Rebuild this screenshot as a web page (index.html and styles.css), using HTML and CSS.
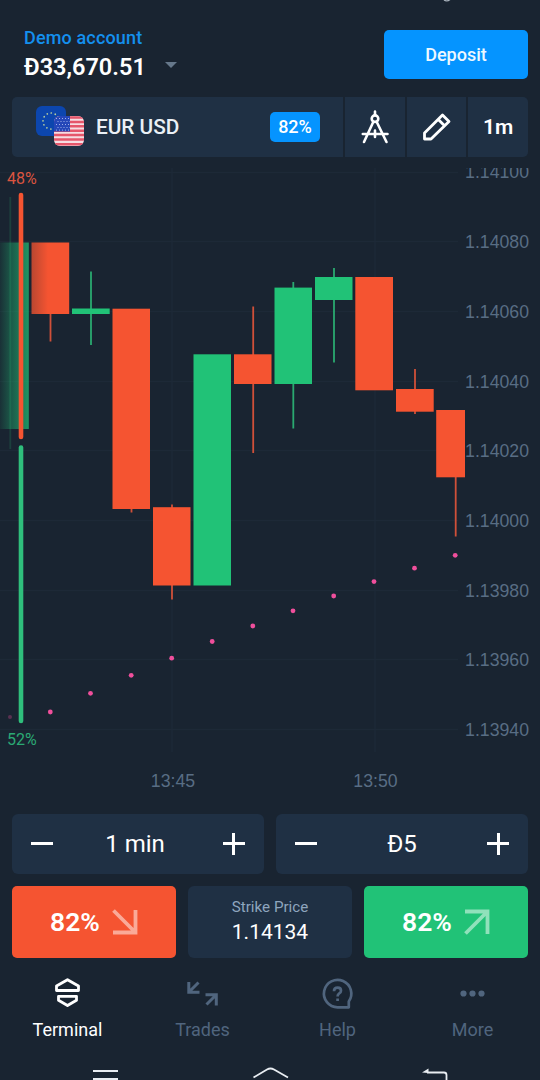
FILE: index.html
```html
<!DOCTYPE html>
<html lang="en">
  <head>
    <meta charset="UTF-8" />
    <meta name="viewport" content="width=device-width, initial-scale=1.0" />
    <title>EUR USD Terminal</title>
    <link rel="stylesheet" href="styles.css">
  </head>
  <body>
    <div class="app">
      <svg class="statusBar" viewBox="0 0 540 12">
        <path d="M444 0q3 2 6 -0.5" fill="none" stroke="#a9b3bd" stroke-width="1.3" />
      </svg>
      <header class="header">
        <div class="account">
          <span class="accountType">Demo account</span>
          <div class="balanceRow">
            <span class="balance">Đ33,670.51</span>
            <span class="caret"></span>
          </div>
        </div>
        <button class="depositBtn">Deposit</button>
      </header>

      <div class="toolbar">
        <div class="asset">
          <svg class="flags" width="50" height="42" viewBox="35 106.500 50 42">
            <rect x="36" y="106.500" width="30" height="30" rx="6" fill="#0c46ae" />
            <circle cx="51" cy="121.500" r="8" fill="none" stroke="#b9cf9c" stroke-width="1.7" stroke-linecap="round" stroke-dasharray="0.1 4.089" />
            <clipPath id="usFlag"><rect x="54" y="116.500" width="30" height="30" rx="6" /></clipPath>
            <g clip-path="url(#usFlag)">
              <rect x="54" y="116" width="30" height="31" fill="#f6dde2" />
              <path d="M54 118H84M54 122.400H84M54 126.800H84M54 131.200H84M54 135.600H84M54 140H84M54 144.700H84" stroke="#e5566b" stroke-width="2.500" />
              <rect x="54" y="116" width="16" height="16" fill="#2547b8" />
              <path d="M56 119H70M57.500 122H70M56 125H70M57.500 128H70M56 130.600H70" stroke="#9eb0e8" stroke-width="1" stroke-dasharray="1 2" />
            </g>
          </svg>
          <span class="assetName">EUR USD</span>
          <span class="payout">82%</span>
        </div>
        <button class="tool">
          <svg width="30" height="36" viewBox="360 109 30 36" fill="none" stroke="#fff" stroke-width="2.600" stroke-linecap="round">
            <path d="M375 111.500v3.500M373.500 121.500L364 142M376.500 121.500L386.500 142M362.800 134H387.500M375 130.500v6.500" />
            <circle cx="375" cy="118.700" r="3.300" />
          </svg>
        </button>
        <button class="tool">
          <svg width="30" height="30" viewBox="422 111.500 30 30" fill="none" stroke="#fff" stroke-width="2.800" stroke-linejoin="round">
            <path d="M424.500 138.500V132.500L442.500 114.500L449 121L431 138.500ZM437.800 118.500L444.800 125.500" />
          </svg>
        </button>
        <button class="tool timeframe">1m</button>
      </div>

      <svg class="chart" viewBox="0 168 540 634">
        <defs>
          <linearGradient id="fadeGreen" gradientUnits="userSpaceOnUse" x1="0" x2="29" y1="0" y2="0">
            <stop offset="0" stop-color="#21c277" stop-opacity="0.080" />
            <stop offset="0.350" stop-color="#21c277" stop-opacity="0.320" />
            <stop offset="1" stop-color="#21c277" stop-opacity="0.720" />
          </linearGradient>
          <linearGradient id="fadeRed" gradientUnits="userSpaceOnUse" x1="31" x2="48" y1="0" y2="0">
            <stop offset="0" stop-color="#f55431" stop-opacity="0.720" />
            <stop offset="1" stop-color="#f55431" />
          </linearGradient>
        </defs>

        <path class="grid" d="M0 172.500H458M0 241.500H458M0 311.500H458M0 381.500H458M0 450.500H458M0 520.500H458M0 590.500H458M0 659.500H458M0 729.500H458M172 168V752M375 168V752" />

        <g class="prices">
          <text x="529" y="178">1.14100</text>
          <text x="529" y="248">1.14080</text>
          <text x="529" y="318">1.14060</text>
          <text x="529" y="387.500">1.14040</text>
          <text x="529" y="457">1.14020</text>
          <text x="529" y="527">1.14000</text>
          <text x="529" y="596.500">1.13980</text>
          <text x="529" y="666">1.13960</text>
          <text x="529" y="735.500">1.13940</text>
        </g>
        <g class="times">
          <text x="173" y="786.700">13:45</text>
          <text x="375.500" y="786.700">13:50</text>
        </g>

        <!-- wicks -->
        <path class="wick up faded" d="M10.300 197V449" />
        <path class="wick up" d="M91 271.500V345M293.300 282V428.500M334 268V362.500" />
        <path class="wick down" d="M50.500 313V341.500M131.500 508V512.500M172 504.500V599.500M253.200 306.500V453M415 369V414M455.700 476V536.500" />

        <!-- bodies -->
        <rect x="0" y="242.500" width="28.800" height="186.500" fill="url(#fadeGreen)" />
        <rect x="31.500" y="242.500" width="37.700" height="71.500" fill="url(#fadeRed)" />
        <rect class="up" x="72" y="308.500" width="37.700" height="5.500" />
        <rect class="down" x="112.500" y="308.700" width="37.500" height="200.300" />
        <rect class="down" x="153" y="507.200" width="37.500" height="78.300" />
        <rect class="up" x="193.500" y="354.300" width="37.500" height="231.200" />
        <rect class="down" x="234" y="354.300" width="37.500" height="29.700" />
        <rect class="up" x="274.500" y="287.600" width="37.500" height="96.400" />
        <rect class="up" x="315" y="277" width="37.500" height="23" />
        <rect class="down" x="355.300" y="277" width="37.700" height="113.300" />
        <rect class="down" x="396" y="389" width="37.700" height="22.700" />
        <rect class="down" x="436.200" y="410" width="28.800" height="67.300" />

        <g class="dots">
          <circle cx="10" cy="717" r="2" opacity="0.300" />
          <circle cx="50.300" cy="712" r="2.400" />
          <circle cx="90.500" cy="693.300" r="2.400" />
          <circle cx="131.200" cy="675.300" r="2.400" />
          <circle cx="171.700" cy="658.200" r="2.400" />
          <circle cx="212.200" cy="641.500" r="2.400" />
          <circle cx="252.800" cy="626" r="2.400" />
          <circle cx="293" cy="610.800" r="2.400" />
          <circle cx="333.700" cy="596" r="2.400" />
          <circle cx="374" cy="581.600" r="2.400" />
          <circle cx="414.500" cy="568.200" r="2.400" />
          <circle cx="455.200" cy="555.300" r="2.400" />
        </g>

        <!-- traders sentiment -->
        <path class="sentiment" stroke="#f55431" d="M21 195V437" />
        <path class="sentiment" stroke="#2fbf7c" d="M21 447.500V721" />
        <text class="share" x="7" y="184" fill="#dc5540">48%</text>
        <text class="share" x="7" y="745" fill="#2ba974">52%</text>
      </svg>

      <div class="inputs">
        <div class="stepper">
          <button class="stepBtn minus"></button>
          <span class="duration">1 min</span>
          <button class="stepBtn plus"></button>
        </div>
        <div class="stepper">
          <button class="stepBtn minus"></button>
          <span>Đ5</span>
          <button class="stepBtn plus"></button>
        </div>
      </div>

      <div class="deals">
        <button class="dealBtn sell">
          <span>82%</span>
          <svg width="26" height="26" viewBox="0 0 26 26"><path d="M1.500 1.500L23 23M1 23.500H23.500V1" /></svg>
        </button>
        <div class="strike">
          <span class="strikeLabel">Strike Price</span>
          <span class="strikeValue">1.14134</span>
        </div>
        <button class="dealBtn buy">
          <span>82%</span>
          <svg width="26" height="26" viewBox="0 0 26 26"><path d="M1.500 24.500L23 3M1 2.500H23.500V25" /></svg>
        </button>
      </div>

      <nav class="tabs">
        <a class="tab active">
          <svg width="34" height="34" viewBox="51 976 34 34" stroke-width="2.800" stroke-linejoin="round">
            <path d="M56.500 990.500V986L67.500 979.700L78.500 986V990.500ZM58.500 996.300H76.500V1000.300L67.500 1005.500L58.500 1000.300Z" />
          </svg>
          <span>Terminal</span>
        </a>
        <a class="tab">
          <svg width="34" height="34" viewBox="186 976 34 34" stroke-width="3">
            <path d="M198.500 982.500L189.500 991.500M188.800 982V992.300H199.500M206.500 1004.500L215.500 995.500M205.500 994.800H216.300V1005.500" />
          </svg>
          <span>Trades</span>
        </a>
        <a class="tab">
          <svg width="34" height="34" viewBox="321 976 34 34" stroke-width="2.700">
            <path d="M348.800 1007.300H337.500A13.700 13.700 0 1 1 348.800 1001.500Z" stroke-linejoin="round" />
            <path d="M334 991.300Q334 987.700 337.700 987.700Q341 987.700 341 990.700Q341 992.500 339 993.700Q337.600 994.600 337.600 996.500M337.600 998.500V1001" />
          </svg>
          <span>Help</span>
        </a>
        <a class="tab">
          <svg class="moreIcon" width="34" height="34" viewBox="456 976 34 34">
            <circle cx="463.500" cy="993.500" r="3.100" />
            <circle cx="472.500" cy="993.500" r="3.100" />
            <circle cx="481.500" cy="993.500" r="3.100" />
          </svg>
          <span>More</span>
        </a>
      </nav>

      <svg class="systemNav" viewBox="0 1060 540 20">
        <path d="M93 1071H118M93 1079H118M253.500 1077.500L267 1069.500Q270.500 1067.500 274 1069.500L288 1077.500" />
        <path d="M427 1072.500H444Q446.500 1072.500 446.500 1075V1080" />
        <path d="M422 1072.500L428.500 1068.500V1073Z" fill="#e9edf2" stroke="none" />
      </svg>
    </div>
  </body>
</html>
```

FILE: styles.css
```css
* {
  box-sizing: border-box;
}

body {
  margin: 0;
  background-color: #192431;
  font-family: Roboto, "Liberation Sans", sans-serif;
  color: #fff;
}

button {
  font-family: inherit;
  color: inherit;
  border: none;
  padding: 0;
  background: none;
}

svg {
  display: block;
}

.app {
  height: 1080px;
  display: flex;
  flex-direction: column;
  overflow: hidden;
}

.statusBar {
  width: 540px;
  height: 12px;
}

.header {
  height: 84.5px;
  padding: 14px 12px 0 24px;
  display: flex;
  justify-content: space-between;
  align-items: flex-start;
}

.account {
  display: flex;
  flex-direction: column;
}

.accountType {
  font-size: 18px;
  line-height: 24px;
  font-weight: 500;
  letter-spacing: 0.15px;
  color: #1490ee;
}

.balanceRow {
  display: flex;
  align-items: center;
  gap: 19px;
}

.balance {
  padding-top: 1px;
  font-size: 23.5px;
  line-height: 32px;
  font-weight: 600;
}

.caret {
  border: 6.5px solid transparent;
  border-top-color: #66788b;
  border-bottom: none;
  margin-top: -3px;
}

.depositBtn {
  width: 144px;
  height: 49px;
  margin-top: 4px;
  border-radius: 5px;
  background-color: #0594ff;
  color: #eef8ff;
  font-size: 18px;
  font-weight: 500;
}

.toolbar {
  height: 60px;
  margin: 0 12px;
  display: flex;
  gap: 2px;
  border-radius: 5px;
  overflow: hidden;
}

.asset {
  width: 331px;
  padding: 0 23px 0 23px;
  display: flex;
  align-items: center;
  background-color: #1f3044;
}

.assetName {
  flex: 1;
  margin-left: 11px;
  padding-top: 1px;
  font-size: 20.8px;
  font-weight: 500;
  color: #eaf0f6;
}

.payout {
  width: 50px;
  height: 30px;
  border-radius: 5px;
  background-color: #0594ff;
  font-size: 18px;
  line-height: 30px;
  font-weight: 500;
  text-align: center;
}

.tool {
  flex: 1;
  display: flex;
  align-items: center;
  justify-content: center;
  background-color: #1f3044;
}

.timeframe {
  padding-top: 1px;
  font-size: 21px;
  font-weight: 600;
}

.chart {
  width: 540px;
  height: 634px;
  margin-top: 11.5px;
}

.grid {
  fill: none;
  stroke: #1d2937;
  stroke-width: 1.5;
}

.prices,
.times {
  font-family: "Liberation Sans", sans-serif;
  font-size: 17.7px;
  fill: #586d84;
}

.prices {
  text-anchor: end;
}

.times {
  text-anchor: middle;
}

.up {
  fill: #21c277;
  stroke: none;
}

.down {
  fill: #f55431;
  stroke: none;
}

.wick {
  stroke-width: 1.8;
}

.wick.up {
  stroke: #2aa970;
}

.wick.down {
  stroke: #cf5039;
}

.wick.faded {
  opacity: 0.2;
}

.dots {
  fill: #f04f9c;
}

.sentiment {
  stroke-width: 4.6;
  stroke-linecap: round;
}

.share {
  font-size: 16px;
}

.inputs {
  height: 60px;
  margin: 11.5px 12px 0;
  display: flex;
  gap: 12px;
}

.stepper {
  flex: 1;
  padding: 0 19px;
  display: flex;
  align-items: center;
  justify-content: space-between;
  border-radius: 6px;
  background-color: #1f3044;
  font-size: 24px;
}

.duration {
  margin-right: 6px;
}

.stepBtn {
  width: 22px;
  height: 22px;
  background: linear-gradient(#fff, #fff) center / 22px 3px no-repeat;
}

.plus {
  background: linear-gradient(#fff, #fff) center / 22px 3px no-repeat,
    linear-gradient(#fff, #fff) center / 3px 22px no-repeat;
}

.deals {
  height: 72px;
  margin: 12px 12px 0;
  display: flex;
  gap: 12px;
}

.dealBtn {
  flex: 1;
  display: flex;
  align-items: center;
  justify-content: center;
  gap: 12px;
  border-radius: 5px;
  font-size: 26.5px;
  font-weight: 600;
}

.dealBtn path {
  fill: none;
  stroke: #fff;
  stroke-opacity: 0.5;
  stroke-width: 3.8;
}

.sell {
  background-color: #f55431;
}

.buy {
  background-color: #21c277;
}

.strike {
  width: 164px;
  padding-top: 2px;
  display: flex;
  flex-direction: column;
  align-items: center;
  justify-content: center;
  border-radius: 6px;
  background-color: #1f3044;
}

.strikeLabel {
  font-size: 15.2px;
  line-height: 19px;
  color: #8ea5be;
}

.strikeValue {
  font-size: 21px;
  line-height: 31px;
}

.tabs {
  display: flex;
  height: 102px;
  padding-top: 18px;
}

.tab {
  flex: 1;
  display: flex;
  flex-direction: column;
  align-items: center;
  gap: 8px;
  font-size: 18px;
  line-height: 24px;
  color: #50657e;
}

.tab svg {
  fill: none;
  stroke: currentColor;
}

.tab .moreIcon {
  fill: currentColor;
  stroke: none;
}

.tab.active {
  color: #fff;
}

.systemNav {
  width: 540px;
  height: 20px;
  fill: none;
  stroke: #e9edf2;
  stroke-width: 1.8;
}
```
